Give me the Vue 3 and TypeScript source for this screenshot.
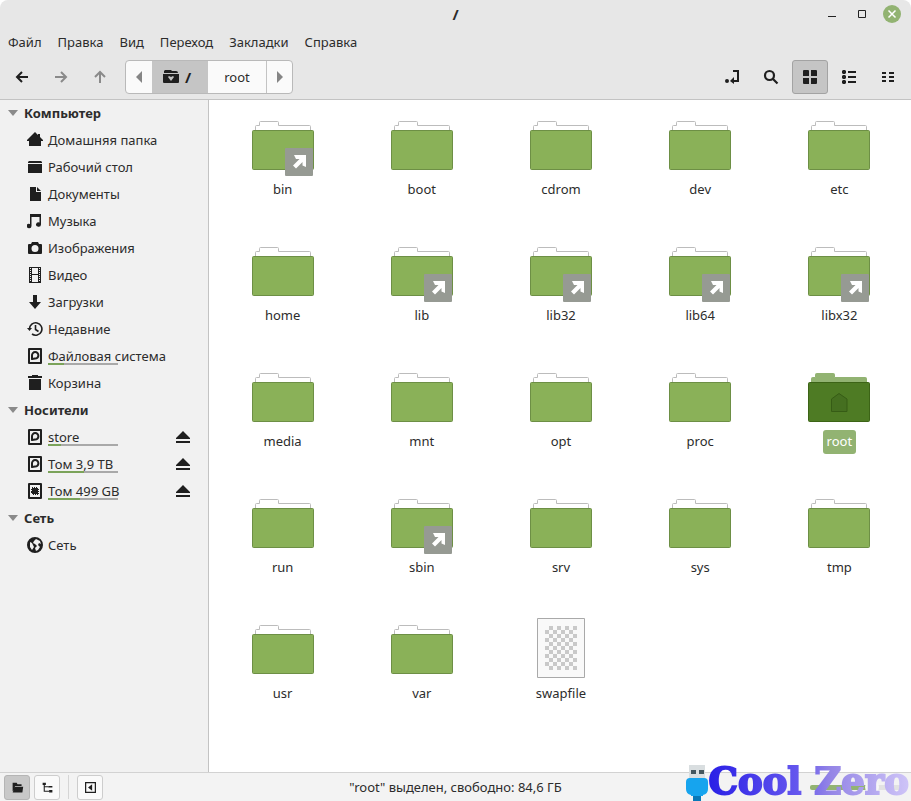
<script setup lang="ts">
import { ref } from 'vue'

interface Glyph {
  fill?: string
  stroke?: string
  width?: number
}
interface Place {
  label: string
  icon: string
  used?: number
  eject?: boolean
}
interface Section {
  title: string
  places: Place[]
}
interface Entry {
  name: string
  link?: boolean
  kind?: 'home' | 'file'
}

const glyphs: Record<string, Glyph> = {
  home: { fill: 'M8 0L11 3V2h2v3l3 3v1h-2v5H2V9H0V8z' },
  desktop: { fill: 'M2 2h12l1 1v1H1V3zM1 5h14v9H1z' },
  document: { fill: 'M3 1h6v5h5v9H3zM10 1l4 4h-4z' },
  music: { fill: 'M3 1h11v10.500a2.500 2.200 0 1 1-1.500-2V4h-8v9a2.500 2.200 0 1 1-1.500-2z' },
  camera: { fill: 'M5 2h6l1 2h2q1 0 1 1v8q0 1-1 1H2q-1 0-1-1V5q0-1 1-1h2zM8 5a3.500 3.500 0 1 0 0 7a3.500 3.500 0 1 0 0-7z' },
  video: { fill: 'M2 0h12v16H2zM5 1v6h6V1zM5 8v7h6V8zM3 1v1h1V1zM3 3v1h1V3zM3 5v1h1V5zM3 7v1h1V7zM3 9v1h1V9zM3 11v1h1v-1zM3 13v1h1v-1zM12 1v1h1V1zM12 3v1h1V3zM12 5v1h1V5zM12 7v1h1V7zM12 9v1h1V9zM12 11v1h1v-1zM12 13v1h1v-1z' },
  download: { fill: 'M6 1h4v7h4l-6 7-6-7h4z' },
  recent: { fill: 'M0 7h5L2.500 10z', stroke: 'M2.500 8A6.200 6.200 0 1 1 5 13M8.500 4v4.500l3 2', width: 1.6 },
  disk: { stroke: 'M2 1h12v14H2zM5 11V7.500a3.200 3.200 0 1 1 3 3z', width: 2 },
  ssd: { fill: 'M5 4h1v1h1V4h1v1h1V4h1v1h1v1h1v1h-1v1h1v1h-1v1h1v1h-1v1h-1v-1H9v1H8v-1H7v1H6v-1H5v-1H4v-1h1V9H4V8h1V7H4V6h1z', stroke: 'M2 1h12v14H2z', width: 2 },
  trash: { fill: 'M5 0h6v1h4v2H1V1h4zM2 4h12v11H2z' },
  network: { fill: 'M8 0a8 8 0 1 0 0 16A8 8 0 0 0 8 0zM9 2l4 2 1 3-2-1-1 2 2 2-2 3-2 1-1-3 2-2-2-2-2-1 1-2zM3 5l2 1 1 2 1 2-2 3-2-3z' },
  eject: { fill: 'M8 2l7 7v1H1V9zM1 12h14v2H1z' },
  back: { stroke: 'M14 8H3M8 3L3 8l5 5', width: 2 },
  forward: { stroke: 'M2 8h11M8 3l5 5-5 5', width: 2 },
  up: { stroke: 'M8 14V3M3 8l5-5 5 5', width: 2 },
  enter: { fill: 'M1 12a2 2 0 1 1 4 0a2 2 0 1 1-4 0zM6 12l4-4v7z', stroke: 'M9 2h5v10H9', width: 2 },
  search: { stroke: 'M11 6.500a4.500 4.500 0 1 1-9 0a4.500 4.500 0 1 1 9 0M10 10l4.500 4.500', width: 2.2 },
  grid: { fill: 'M2 1h4q1 0 1 1v5H1V2q0-1 1-1zM9 1h5q1 0 1 1v5H9zM1 9h6v6H2q-1 0-1-1zM9 9h6v5q0 1-1 1H9z' },
  list: { fill: 'M2 1h2l1 1v2l-1 1H2L1 4V2zM2 6h2l1 1v2l-1 1H2L1 9V7zM2 11h2l1 1v2l-1 1H2l-1-1v-2zM7 2h8v2H7zM7 7h8v2H7zM7 12h8v2H7z' },
  compact: { fill: 'M2 3h4v2H2zM9 3h5v2H9zM2 7h4v2H2zM9 7h5v2H9zM2 11h4v2H2zM9 11h5v2H9z' },
  prev: { fill: 'M11 2v12L5 8z' },
  next: { fill: 'M5 2v12l6-6z' },
  root: { fill: 'M2 1h6l1 1h4q2 0 2 2H1V2zM0 5h16v8q0 1-1 1H1q-1 0-1-1zM5 8l3 4 3-4-1-1-2 1-2-1z' },
  folder: { fill: 'M2 2h5l1 2h5v2H5l-1 4-2 3zM5 7h10l-1 7H2z' },
  tree: { fill: 'M2 2h4v3H2zM9 6h5v2H9zM10 11h4v3h-4z', stroke: 'M4 4v8.500h6M4 7h5', width: 1.3 },
  panel: { fill: 'M10 4v8L5 8z', stroke: 'M2 2h12v12H2z', width: 2 },
}

const menus = ['Файл', 'Правка', 'Вид', 'Переход', 'Закладки', 'Справка']

const navigation = [
  { icon: 'back', label: 'Назад', off: false },
  { icon: 'forward', label: 'Вперёд', off: true },
  { icon: 'up', label: 'Вверх', off: true },
]
const tools = [
  { icon: 'enter', label: 'Адрес' },
  { icon: 'search', label: 'Поиск' },
]
const views = [
  { icon: 'grid', label: 'Значки' },
  { icon: 'list', label: 'Список' },
  { icon: 'compact', label: 'Компактный вид' },
]

const sections: Section[] = [
  {
    title: 'Компьютер',
    places: [
      { label: 'Домашняя папка', icon: 'home' },
      { label: 'Рабочий стол', icon: 'desktop' },
      { label: 'Документы', icon: 'document' },
      { label: 'Музыка', icon: 'music' },
      { label: 'Изображения', icon: 'camera' },
      { label: 'Видео', icon: 'video' },
      { label: 'Загрузки', icon: 'download' },
      { label: 'Недавние', icon: 'recent' },
      { label: 'Файловая система', icon: 'disk', used: 23 },
      { label: 'Корзина', icon: 'trash' },
    ],
  },
  {
    title: 'Носители',
    places: [
      { label: 'store', icon: 'disk', used: 18, eject: true },
      { label: 'Том 3,9 TB', icon: 'disk', used: 52, eject: true },
      { label: 'Том 499 GB', icon: 'ssd', used: 46, eject: true },
    ],
  },
  { title: 'Сеть', places: [{ label: 'Сеть', icon: 'network' }] },
]

const entries: Entry[] = [
  { name: 'bin', link: true }, { name: 'boot' }, { name: 'cdrom' }, { name: 'dev' }, { name: 'etc' },
  { name: 'home' }, { name: 'lib', link: true }, { name: 'lib32', link: true }, { name: 'lib64', link: true }, { name: 'libx32', link: true },
  { name: 'media' }, { name: 'mnt' }, { name: 'opt' }, { name: 'proc' }, { name: 'root', kind: 'home' },
  { name: 'run' }, { name: 'sbin', link: true }, { name: 'srv' }, { name: 'sys' }, { name: 'tmp' },
  { name: 'usr' }, { name: 'var' }, { name: 'swapfile', kind: 'file' },
]

const selected = ref('root')
const view = ref('grid')
const zoom = ref(66)
</script>

<template>
  <div class="window">
    <header class="chrome">
      <div class="titlebar">
        <h1 class="title">/</h1>
        <div class="controls">
          <button class="control" aria-label="Свернуть"><svg viewBox="0 0 18 18"><path d="M5 11.500h8" stroke="#222" /></svg></button>
          <button class="control" aria-label="Развернуть"><svg viewBox="0 0 18 18"><path d="M5.500 5.500h7v7h-7z" stroke="#222" fill="none" /></svg></button>
          <button class="control close" aria-label="Закрыть"><svg viewBox="0 0 18 18"><path d="M5.500 5.500l7 7m0-7l-7 7" stroke="#fff" stroke-width="1.500" /></svg></button>
        </div>
      </div>
      <nav class="menubar">
        <button v-for="m in menus" :key="m" class="menu">{{ m }}</button>
      </nav>
      <div class="toolbar">
        <div class="group">
          <button v-for="n in navigation" :key="n.icon" class="tool" :class="{ off: n.off }" :aria-label="n.label">
            <svg class="icon" viewBox="0 0 16 16"><path :d="glyphs[n.icon].stroke" fill="none" stroke="currentColor" :stroke-width="glyphs[n.icon].width" /></svg>
          </button>
        </div>
        <div class="path">
          <button class="crumb arrow" aria-label="Левее"><svg class="icon" viewBox="0 0 16 16"><path :d="glyphs.prev.fill" fill="currentColor" /></svg></button>
          <button class="crumb current">
            <svg class="icon" viewBox="0 0 16 16"><path :d="glyphs.root.fill" fill="currentColor" fill-rule="evenodd" /></svg>
            <b class="slash">/</b>
          </button>
          <button class="crumb name">root</button>
          <button class="crumb arrow right" aria-label="Правее"><svg class="icon" viewBox="0 0 16 16"><path :d="glyphs.next.fill" fill="currentColor" /></svg></button>
        </div>
        <div class="group end">
          <button v-for="t in tools" :key="t.icon" class="tool" :aria-label="t.label">
            <svg class="icon" viewBox="0 0 16 16">
              <path v-if="glyphs[t.icon].fill" :d="glyphs[t.icon].fill" fill="currentColor" />
              <path :d="glyphs[t.icon].stroke" fill="none" stroke="currentColor" :stroke-width="glyphs[t.icon].width" />
            </svg>
          </button>
          <button v-for="v in views" :key="v.icon" class="tool" :class="{ on: view === v.icon }" :aria-label="v.label" @click="view = v.icon">
            <svg class="icon" viewBox="0 0 16 16"><path :d="glyphs[v.icon].fill" fill="currentColor" /></svg>
          </button>
        </div>
      </div>
    </header>

    <div class="body">
      <aside class="sidebar">
        <section v-for="s in sections" :key="s.title">
          <h2 class="heading"><span class="triangle"></span>{{ s.title }}</h2>
          <ul class="places">
            <li v-for="p in s.places" :key="p.label" class="place">
              <a class="link" href="#">
                <svg class="icon" viewBox="0 0 16 16">
                  <path v-if="glyphs[p.icon].fill" :d="glyphs[p.icon].fill" fill="currentColor" fill-rule="evenodd" />
                  <path v-if="glyphs[p.icon].stroke" :d="glyphs[p.icon].stroke" fill="none" stroke="currentColor" stroke-linejoin="round" :stroke-width="glyphs[p.icon].width" />
                </svg>
                <span class="text">{{ p.label }}<span v-if="p.used" class="usage"><span class="used" :style="{ width: p.used + '%' }"></span></span></span>
              </a>
              <button v-if="p.eject" class="eject" :aria-label="'Извлечь ' + p.label"><svg class="icon" viewBox="0 0 16 16"><path :d="glyphs.eject.fill" fill="currentColor" /></svg></button>
            </li>
          </ul>
        </section>
      </aside>

      <main class="files">
        <button v-for="e in entries" :key="e.name" class="entry" :class="{ selected: selected === e.name }" @click="selected = e.name">
          <svg v-if="e.kind === 'file'" class="picture" viewBox="0 0 64 64">
            <defs>
              <pattern id="checks" x="16" y="8" width="8" height="8" patternUnits="userSpaceOnUse">
                <path d="M4 0h4v4H4zM0 4h4v4H0z" fill="#c9c9c9" />
              </pattern>
            </defs>
            <path d="M8.500 .5h47v59h-47z" fill="#f9f9f9" stroke="#a9a9a9" />
            <path d="M16 8h32v44H16z" fill="url(#checks)" />
          </svg>
          <svg v-else class="picture" viewBox="0 0 64 64">
            <path class="paper" d="M4.500 17V12.500q0-1 1-1h3V8.500q0-1 1-1h17q1 0 1 1v3h31q1 0 1 1v4.500z" />
            <rect class="front" x="1.500" y="16.500" width="61" height="39" rx="1" />
            <path v-if="e.kind === 'home'" d="M24.500 33L32 27.500l8 5.500v12.500h-15.500z" fill="#456f20" stroke="#365c15" />
            <g v-if="e.link">
              <rect x="34" y="34" width="28" height="28" rx="1" fill="#969a93" />
              <path d="M43 41h12v12l-3.500-1.500v-3.500L45 54.500 42 51.500 48.500 45h-3.500z" fill="#fff" />
            </g>
          </svg>
          <span class="label">{{ e.name }}</span>
        </button>
      </main>
    </div>

    <footer class="status">
      <div class="panels">
        <button class="mini on" aria-label="Места"><svg viewBox="0 0 16 16"><path :d="glyphs.folder.fill" fill="currentColor" /></svg></button>
        <button class="mini" aria-label="Дерево"><svg viewBox="0 0 16 16"><path :d="glyphs.tree.fill" fill="currentColor" /><path :d="glyphs.tree.stroke" fill="none" stroke="currentColor" stroke-width="1.300" /></svg></button>
        <span class="divider"></span>
        <button class="mini" aria-label="Скрыть боковую панель"><svg viewBox="0 0 16 16"><path :d="glyphs.panel.fill" fill="currentColor" /><path :d="glyphs.panel.stroke" fill="none" stroke="currentColor" stroke-width="1.500" /></svg></button>
      </div>
      <p class="summary">"root" выделен, свободно: 84,6 ГБ</p>
      <div class="zoom"><input v-model="zoom" class="slider" type="range" min="0" max="100" aria-label="Масштаб" /></div>
    </footer>

    <div class="brand">
      <svg class="usb" viewBox="0 0 24 36">
        <path d="M4 0h16v14H4z" fill="#d9dee0" />
        <path d="M6 5h5v4H6zM14 5h5v4h-5z" fill="#44565e" />
        <path d="M1 17q0-4 4-4h14q4 0 4 4v7q0 5-5 6v1H6v-1q-5-1-5-6z" fill="#16a4ee" />
        <path d="M8 31h8v5H8z" fill="#0878b8" />
      </svg>
      <span class="wordmark">Cool Zero</span>
    </div>
  </div>
</template>

<style>
body {
  background: #fff;
}
</style>

<style scoped>
.window {
  position: relative;
  box-sizing: border-box;
  min-height: 100vh;
  display: flex;
  flex-direction: column;
  color: #2c2c2c;
  font: 13px/20px "Noto Sans", sans-serif;
}
button {
  margin: 0;
  padding: 0;
  border: 0;
  background: none;
  color: inherit;
  font: inherit;
}
.icon {
  display: block;
  flex: none;
  width: 16px;
  height: 16px;
}
.chrome {
  background: #e7e7e7;
  border-bottom: 1px solid #c3c3c3;
  border-radius: 8px 8px 0 0;
}
.titlebar {
  display: grid;
  grid-template-columns: 1fr auto 1fr;
  align-items: center;
  height: 28px;
  padding: 0 10px;
}
.title,
.slash {
  font-size: 15px;
}
.title {
  grid-column: 2;
  margin: 0;
}
.controls {
  display: flex;
  justify-content: flex-end;
  gap: 12px;
}
.control {
  width: 18px;
  height: 18px;
  border-radius: 50%;
}
.control svg {
  display: block;
}
.close {
  background: #92b372;
}
.menubar {
  display: flex;
  align-items: center;
  gap: 16px;
  height: 28px;
  padding: 0 8px;
}
.toolbar {
  display: flex;
  align-items: center;
  gap: 7px;
  padding: 4px 5px 5px 4px;
}
.group {
  display: flex;
  gap: 3px;
}
.end {
  margin-left: auto;
}
.tool {
  box-sizing: border-box;
  display: grid;
  place-items: center;
  width: 36px;
  height: 34px;
  border-radius: 3px;
  color: #1f1f1f;
}
.off {
  color: #8a8a8a;
}
.tool.on {
  background: #c5c5c5;
  border: 1px solid #a3a3a3;
}
.path {
  box-sizing: border-box;
  display: flex;
  height: 34px;
  border: 1px solid #b9b9b9;
  border-radius: 4px;
  background: #fafafa;
  overflow: hidden;
}
.crumb {
  display: flex;
  align-items: center;
  justify-content: center;
  gap: 6px;
}
.arrow {
  width: 26px;
  color: #858585;
}
.right {
  border-left: 1px solid #c3c3c3;
}
.current {
  box-sizing: border-box;
  width: 56px;
  padding-right: 6px;
  background: #c5c5c5;
  color: #1f1f1f;
}
.name {
  width: 58px;
}
.body {
  flex: 1;
  display: flex;
}
.sidebar {
  flex: none;
  width: 208px;
  background: #f1f1f1;
  border-right: 1px solid #c3c3c3;
}
.heading {
  box-sizing: border-box;
  display: flex;
  align-items: center;
  gap: 6px;
  height: 27px;
  margin: 0;
  padding: 0 0 2px 8px;
  font-size: 13px;
}
.triangle {
  border: 5px solid transparent;
  border-top: 6px solid #8a8a8a;
  border-bottom: 0;
}
.places {
  margin: 0;
  padding: 0;
  list-style: none;
}
.place {
  box-sizing: border-box;
  display: flex;
  align-items: center;
  justify-content: space-between;
  height: 27px;
  padding: 0 17px 2px 27px;
}
.link {
  display: flex;
  align-items: center;
  gap: 5px;
  color: inherit;
  text-decoration: none;
}
.link .icon,
.eject {
  color: #1f1f1f;
}
.text {
  position: relative;
}
.usage {
  position: absolute;
  left: 0;
  bottom: 1px;
  width: 70px;
  height: 2px;
  background: #a9a9a9;
}
.used {
  display: block;
  height: 2px;
  background: #7ba35a;
}
.files {
  flex: 1;
  display: grid;
  grid-template-columns: repeat(5, 1fr);
  align-content: start;
  row-gap: 38px;
  padding: 14px 2px 14px 4px;
  background: #fff;
}
.entry {
  display: flex;
  flex-direction: column;
  align-items: center;
}
.picture {
  display: block;
  width: 64px;
  height: 64px;
}
.paper {
  fill: #fff;
  stroke: #bcbcbc;
}
.front {
  fill: #8ab158;
  stroke: #6d8f45;
}
.selected .paper {
  fill: #92b372;
  stroke: #92b372;
}
.selected .front {
  fill: #4e7b24;
  stroke: #3c6416;
}
.label {
  padding: 0 4px 2px;
  border-radius: 3px;
  line-height: 22px;
}
.selected .label {
  background: #92b372;
  color: #fff;
}
.status {
  display: grid;
  grid-template-columns: 1fr auto 1fr;
  align-items: center;
  height: 28px;
  padding: 0 4px;
  border-top: 1px solid #d2d2d2;
  background: #f3f3f3;
}
.panels {
  display: flex;
  align-items: center;
  gap: 4px;
}
.mini {
  box-sizing: border-box;
  display: grid;
  place-items: center;
  width: 26px;
  height: 25px;
  border: 1px solid #cdcdcd;
  border-radius: 3px;
  background: #fafafa;
  color: #1f1f1f;
}
.mini svg {
  width: 13px;
  height: 13px;
}
.mini.on {
  background: #c8c8c8;
  border-color: #b5b5b5;
}
.divider {
  width: 1px;
  height: 24px;
  margin: 0 4px;
  background: #d5d5d5;
}
.summary {
  margin: 0;
}
.zoom {
  display: flex;
  justify-content: flex-end;
}
.slider {
  width: 97px;
  height: 5px;
  margin: 0;
  appearance: none;
  border-radius: 2px;
  background: linear-gradient(90deg, #92b372 66%, #e2e2e2 66%);
}
.slider::-webkit-slider-thumb {
  appearance: none;
  width: 14px;
  height: 14px;
  border-radius: 50%;
  background: #f7f7f7;
}
.brand {
  position: absolute;
  right: 0;
  bottom: 0;
  display: flex;
  align-items: flex-end;
  pointer-events: none;
}
.usb {
  width: 24px;
  height: 36px;
}
.wordmark {
  padding-right: 2px;
  font: bold 37px/40px "DejaVu Serif", serif;
  color: transparent;
  background: linear-gradient(90deg, #2a20e6, #6658ee 45%, #9485e6 60%, #d0c6f8);
  background-clip: text;
  -webkit-text-stroke: 2px transparent;
}
</style>
